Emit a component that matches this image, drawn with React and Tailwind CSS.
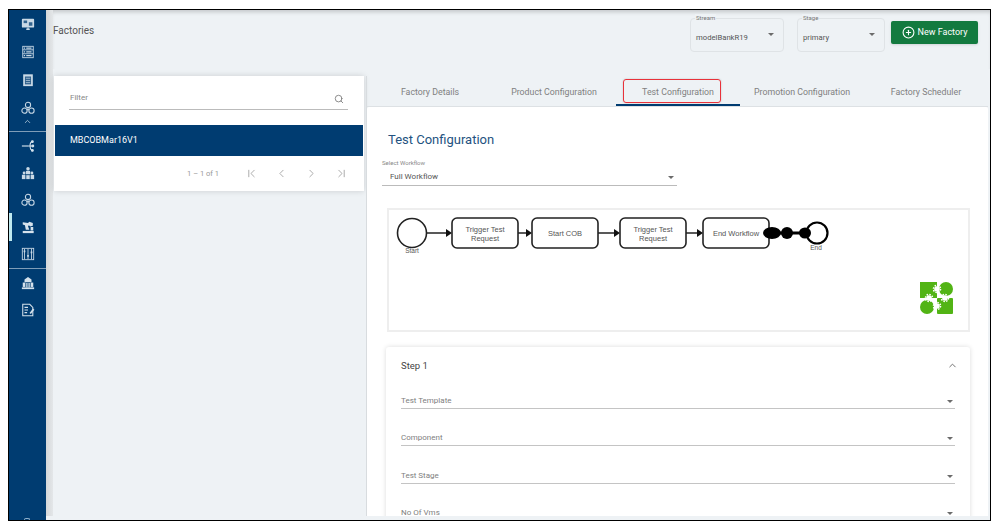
import {
  ChevronUp, Search, ChevronFirst, ChevronLeft, ChevronRight, ChevronLast, CirclePlus,
} from 'lucide-react'

const Caret = ({ className = '' }) => (
  <span className={`w-0 h-0 border-x-[3.5px] border-x-transparent border-t-[3.5px] border-t-[#6b6b6b] ${className}`} />
)

const navIcons = {
  monitor: (
    <>
      <rect x="1" y="2" width="14" height="10" rx="1" fill="#c9d9e6" />
      <rect x="3" y="4" width="4" height="3" fill="#32648f" />
      <rect x="9" y="6" width="4" height="4" fill="#32648f" />
      <path d="M6 14h4M8 12v2" stroke="#c9d9e6" strokeWidth="1.5" />
    </>
  ),
  rows: (
    <>
      <rect x="2" y="1.5" width="12" height="13" fill="none" stroke="#c9d9e6" />
      <path d="M2 5.5h12M2 10h12" stroke="#c9d9e6" />
      <path d="M6 3.5h6M6 7.8h6M6 12.2h6M3.2 3.5h1.5M3.2 7.8h1.5M3.2 12.2h1.5" stroke="#c9d9e6" strokeWidth="1.4" />
    </>
  ),
  clipboard: (
    <>
      <rect x="2.5" y="1.5" width="11" height="13.5" fill="#c9d9e6" />
      <rect x="4.5" y="4" width="7" height="9" fill="#2d5f8b" />
      <path d="M5.5 6h5M5.5 8.5h5M5.5 11h5" stroke="#c9d9e6" strokeWidth=".8" />
    </>
  ),
  trio: (
    <g fill="none" stroke="#c9d9e6" strokeWidth="1.2">
      <circle cx="8" cy="4.5" r="3" />
      <circle cx="4" cy="11" r="3" />
      <circle cx="12" cy="11" r="3" />
      <path d="M8 7.5v2M6.5 10h3" />
    </g>
  ),
  branch: (
    <g fill="none" stroke="#d5e2ec" strokeWidth="1.3">
      <path d="M1 8h7" />
      <path d="M13 3C9 3 10 13 13 13M8 8h5" />
      <circle cx="13" cy="3" r="1" fill="#d5e2ec" />
      <circle cx="13.5" cy="8" r="1" fill="#d5e2ec" />
      <circle cx="13" cy="13" r="1" fill="#d5e2ec" />
    </g>
  ),
  org: (
    <g fill="#c9d9e6">
      <circle cx="8" cy="3" r="2" />
      <rect x="5.5" y="5.5" width="5" height="4" rx="1" />
      <circle cx="3.5" cy="8" r="1.6" />
      <circle cx="12.5" cy="8" r="1.6" />
      <rect x="1" y="10" width="4" height="5" />
      <rect x="6" y="10.5" width="4" height="4.5" />
      <rect x="11" y="10" width="4" height="5" />
    </g>
  ),
  factory: (
    <g fill="#d5e2ec">
      <path d="M2 2.5l6 1 1.5-1.5 4 1.5v3l-3 1-1.5-1.5-1 1 1.5 4h-4L4.5 6 2 5z" />
      <rect x="11" y="8" width="3" height="4" />
      <rect x="2" y="12.5" width="12.5" height="2.5" />
    </g>
  ),
  sliders: (
    <g stroke="#c9d9e6" fill="none">
      <rect x="1.5" y="1.5" width="13" height="13" />
      <path d="M4 2v12M8 2v12M12 2v12" />
      <path d="M3 5h2M7 10h2M11 6h2" strokeWidth="2" />
    </g>
  ),
  building: (
    <g fill="#d5e2ec">
      <path d="M8 1l4 3v3H4V4z" />
      <rect x="2" y="7.5" width="3" height="5" />
      <rect x="11" y="7.5" width="3" height="5" />
      <rect x="6" y="8" width="1.5" height="5" />
      <rect x="8.5" y="8" width="1.5" height="5" />
      <rect x="1" y="13" width="14" height="2" />
    </g>
  ),
  doc: (
    <g fill="none" stroke="#d5e2ec" strokeWidth="1.2">
      <path d="M2 1.5h8l3.5 3.5v9.5H2z" />
      <path d="M4 5h4M4 8h4M4 11h3" />
      <path d="M14.5 7l-4 5" strokeWidth="2" />
    </g>
  ),
}

const NavIcon = ({ name, height = 'h-[27px]' }) => (
  <div className={`${height} flex items-center justify-center`}>
    <svg width="14" height="14" viewBox="0 0 16 16">{navIcons[name]}</svg>
  </div>
)

const Sidebar = () => (
  <aside className="w-[37px] shrink-0 bg-[#003c71] relative flex flex-col">
    <NavIcon name="monitor" height="h-[28px]" />
    <NavIcon name="rows" height="h-[28px]" />
    <NavIcon name="clipboard" height="h-[28px]" />
    <NavIcon name="trio" height="h-[28px]" />
    <div className="h-[11px] flex items-center justify-center text-[#c3d5e4] -mt-[6px]">
      <ChevronUp size={9} />
    </div>
    <div className="h-px bg-[#7f9db8] mt-[4px]" />
    <NavIcon name="branch" />
    <NavIcon name="org" />
    <NavIcon name="trio" />
    <div className="relative">
      <span className="absolute left-0 top-0 w-[3px] h-[28px] bg-[#bfeaf0]" />
      <NavIcon name="factory" />
    </div>
    <NavIcon name="sliders" />
    <div className="h-px bg-[#7f9db8] mt-[1px]" />
    <NavIcon name="building" />
    <NavIcon name="doc" />
    <span className="absolute bottom-0 left-[15px] w-[6px] h-[2px] rounded-t-full border-t border-x border-[#8fb0cb]" />
  </aside>
)

const OutlinedSelect = ({ label, value, width }) => (
  <div className={`relative h-[34px] border border-[#dfe3e6] rounded-[4px] flex items-center justify-between pl-[5px] pr-[9px] ${width}`}>
    <span className="absolute left-[4px] -top-[5px] bg-[#eef2f5] px-[1px] text-[6px] leading-[8px] text-[#777]">{label}</span>
    <span className="text-[7.7px] text-[#555] pt-[6px]">{value}</span>
    <Caret className="mb-[2px]" />
  </div>
)

const Header = () => (
  <header className="h-[59px] flex justify-between pr-[12px] shadow-[inset_0_4px_4px_-2px_rgba(0,0,0,0.18)]">
    <h1 className="text-[10px] leading-[12px] text-[#555] pt-[15px]">Factories</h1>
    <div className="flex gap-[13px] pt-[8px]">
      <OutlinedSelect label="Stream" value="modelBankR19" width="w-[94px]" />
      <OutlinedSelect label="Stage" value="primary" width="w-[88px]" />
      <button className="h-[23px] w-[87px] ml-[-7px] mt-[3px] bg-[#137a3f] rounded-[2px] shadow-sm flex items-center justify-center gap-[3px] text-white text-[9px]">
        <CirclePlus size={13} />
        New Factory
      </button>
    </div>
  </header>
)

const FactoryList = () => (
  <section className="w-[310px] shrink-0 ml-[1px] self-start bg-white shadow-[0_0_6px_rgba(0,0,0,0.15)]">
    <div className="h-[49px] pl-[15px] pr-[16px] pt-[11px]">
      <div className="h-[23px] border-b border-[#bbb] flex items-center justify-between">
        <span className="text-[8px] text-[#888] pl-[1px]">Filter</span>
        <Search size={10} className="text-[#777] mr-[4px] mt-[1px]" />
      </div>
    </div>
    <div className="h-[31px] mx-[1px] bg-[#003c71] flex items-center pl-[15px] text-[9px] text-white">MBCOBMar16V1</div>
    <div className="h-[35px] flex items-center justify-end pr-[16px] text-[#999]">
      <span className="text-[7.5px] mr-[26px]">1 – 1 of 1</span>
      <div className="flex gap-[17px]">
        <ChevronFirst size={13} strokeWidth={1.5} />
        <ChevronLeft size={13} strokeWidth={1.5} />
        <ChevronRight size={13} strokeWidth={1.5} />
        <ChevronLast size={13} strokeWidth={1.5} />
      </div>
    </div>
  </section>
)

const tabs = ['Factory Details', 'Product Configuration', 'Test Configuration', 'Promotion Configuration', 'Factory Scheduler']

const Tabs = () => (
  <nav className="h-[31px] pl-px flex border-b border-[#dde1e4]">
    {tabs.map((t) => (
      <div key={t} className="w-[124px] relative flex items-center justify-center pt-[3px] text-[8.8px] text-[#808080]">
        {t}
        {t === 'Test Configuration' && (
          <>
            <span className="absolute left-0 right-0 bottom-0 h-[2px] bg-[#003c71]" />
            <span className="absolute left-[7px] top-[3px] w-[98px] h-[24px] border border-[#e8323a] rounded-[3px] shadow-[0_0_2px_rgba(0,0,0,0.2)]" />
          </>
        )}
      </div>
    ))}
  </nav>
)

const TaskBox = ({ x, lines }) => (
  <g>
    <rect x={x} y="10" width="66" height="30" rx="5" fill="#fff" stroke="#222" strokeWidth="1.6" />
    {lines.map((l, i) => (
      <text key={l} x={x + 33} y={lines.length === 1 ? 27.5 : 23.5 + i * 9} textAnchor="middle" fontSize="7.5" fill="#555">{l}</text>
    ))}
  </g>
)

const Arrow = ({ x1, x2 }) => (
  <g>
    <line x1={x1} y1="25" x2={x2 - 5} y2="25" stroke="#222" strokeWidth="1.4" />
    <polygon points={`${x2 - 6},21 ${x2},25 ${x2 - 6},29`} fill="#111" />
  </g>
)

// puzzle badge, white gears are cut out of the two green blocks
const GearCut = ({ cx, cy }) => (
  <g>
    <circle cx={cx} cy={cy} r="2.8" fill="#fff" />
    <circle cx={cx} cy={cy} r="3.6" fill="none" stroke="#fff" strokeWidth="1.4" strokeDasharray="1.6 1.2" />
  </g>
)

// diagram coordinates: screen y = 208 + y, screen x = 389 + x
const Workflow = () => (
  <svg width="579" height="119" viewBox="0 2 579 119" className="block" style={{ fontFamily: 'Liberation Sans' }}>
    <circle cx="23" cy="25" r="14.5" fill="#fff" stroke="#222" strokeWidth="1.6" />
    <text x="23" y="45" textAnchor="middle" fontSize="6.5" fill="#555">Start</text>
    <Arrow x1={38} x2={63} />
    <TaskBox x={63} lines={['Trigger Test', 'Request']} />
    <Arrow x1={129} x2={143} />
    <TaskBox x={143} lines={['Start COB']} />
    <Arrow x1={209} x2={231} />
    <TaskBox x={231} lines={['Trigger Test', 'Request']} />
    <Arrow x1={297} x2={314} />
    <TaskBox x={314} lines={['End Workflow']} />
    <line x1="380" y1="25" x2="420" y2="25" stroke="#000" strokeWidth="3" />
    <circle cx="428" cy="25" r="10.5" fill="#fff" stroke="#000" strokeWidth="2.2" />
    <ellipse cx="383" cy="25" rx="9" ry="6" fill="#000" />
    <circle cx="398" cy="25" r="6" fill="#000" />
    <ellipse cx="416" cy="25" rx="6" ry="5.5" fill="#000" />
    <text x="427" y="42" textAnchor="middle" fontSize="6.5" fill="#555">End</text>
    <g fill="#52b415">
      <rect x="531" y="74" width="17" height="16" />
      <circle cx="557" cy="81" r="7" />
      <circle cx="538" cy="99" r="7" />
      <rect x="548" y="90" width="16" height="16" rx="1" />
    </g>
    <GearCut cx={548} cy={81} />
    <GearCut cx={540} cy={90} />
    <GearCut cx={548} cy={98} />
    <GearCut cx={556} cy={90} />
  </svg>
)

const Field = ({ label }) => (
  <div className="h-[37.5px] flex items-end">
    <div className="flex-1 h-[21px] border-b border-[#c4c4c4] flex items-end justify-between">
      <span className="text-[8px] leading-[8px] pb-[3px] text-[#808080]">{label}</span>
      <Caret className="mr-[2px] mb-[5px]" />
    </div>
  </div>
)

const TestConfiguration = () => (
  <section className="flex-1 min-h-0 overflow-hidden bg-white rounded-t-[2px] pt-[25px]">
    <h2 className="ml-[21px] text-[13px] leading-[16px] text-[#24527f]">Test Configuration</h2>
    <div className="ml-[15px] w-[295px] mt-[11px]">
      <div className="text-[6px] leading-[7px] text-[#888]">Select Workflow</div>
      <div className="h-[20px] border-b border-[#bbb] flex items-center justify-between pl-[8px] pr-[3px] pt-[3px]">
        <span className="text-[8px] text-[#555]">Full Workflow</span>
        <Caret />
      </div>
    </div>
    <div className="ml-[20px] w-[583px] h-[124px] mt-[22px] border-2 border-[#eeeeee]">
      <Workflow />
    </div>
    <div className="ml-[19px] w-[584px] mt-[15px] h-[200px] px-[15px] rounded-t-[3px] shadow-[0_0_5px_rgba(0,0,0,0.14)]">
      <div className="h-[36px] flex items-center justify-between">
        <span className="text-[9.5px] text-[#444] pt-[2px]">Step 1</span>
        <ChevronUp size={11} className="text-[#666] mr-[-3px]" />
      </div>
      <div className="-mt-[12px]">
        <Field label="Test Template" />
        <Field label="Component" />
        <Field label="Test Stage" />
        <Field label="No Of Vms" />
      </div>
    </div>
  </section>
)

export default function App() {
  return (
    <div className="w-[998px] h-[525px] bg-white pt-[9px] pl-[8px] font-['Roboto',sans-serif]">
      <div className="w-[983px] h-[512px] border border-black bg-[#eef2f5] flex overflow-hidden">
        <Sidebar />
        <div className="w-[7px] shrink-0 mb-[4px] bg-gradient-to-r from-[#d4d7d9] to-[#e4e7e9]" />
        <main className="flex-1 min-w-0 flex flex-col">
          <Header />
          <div className="flex-1 min-h-0 flex pt-[7px] pb-[4px]">
            <FactoryList />
            <div className="flex-1 min-w-0 ml-[2px] flex flex-col border-l border-[#d8dcdf] mr-[2px]">
              <Tabs />
              <TestConfiguration />
            </div>
          </div>
        </main>
      </div>
    </div>
  )
}
